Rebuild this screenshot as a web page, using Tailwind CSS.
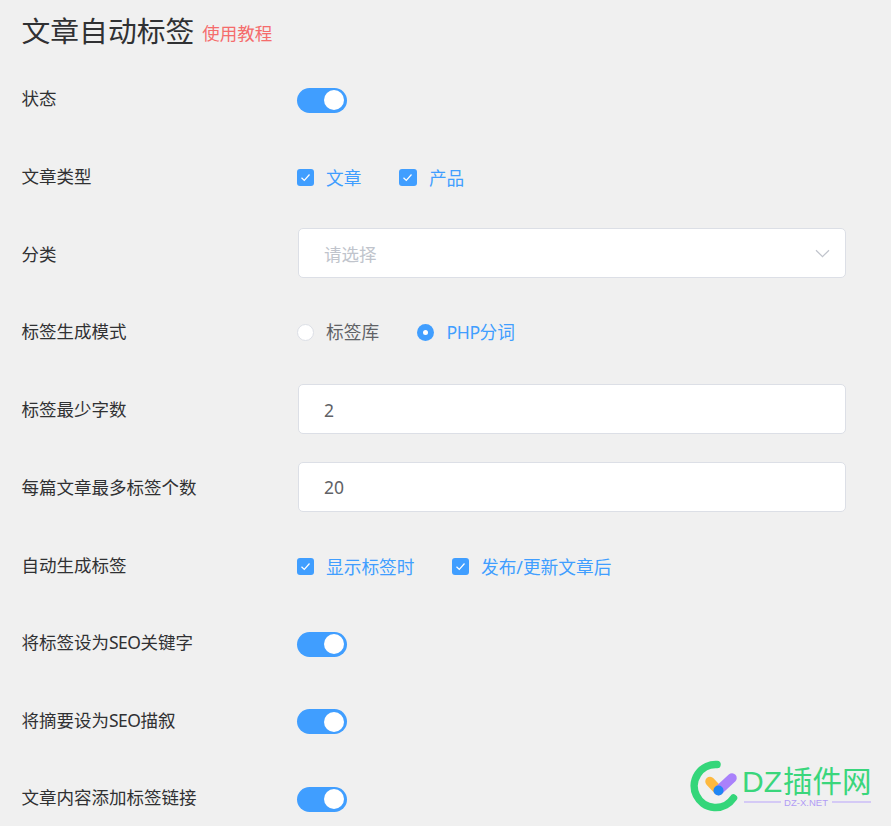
<!DOCTYPE html>
<html lang="zh-CN">
<head>
  <meta charset="UTF-8" />
  <title>文章自动标签</title>
  <script src="https://cdn.jsdelivr.net/npm/@tailwindcss/browser@4"></script>
</head>
<body class="relative h-screen overflow-hidden bg-[#f0f0f0] font-['Noto_Sans','Noto_Sans_CJK_SC',sans-serif] text-[17.5px] text-[#303133]">
  <div class="pl-[21.5px] pr-[45px]">

    <!-- title -->
    <div class="flex items-baseline h-[73.5px] pt-[7px]">
      <h1 class="text-[28.8px] leading-[48px] font-normal text-[#303133]">文章自动标签</h1>
      <a class="ml-[8px] -translate-y-[2px] text-[#f56c6c]">使用教程</a>
    </div>

    <!-- status -->
    <div class="flex items-center h-[48.6px] mb-[29.17px]">
      <label class="w-[275.5px] shrink-0 pt-px">状态</label>
      <span class="relative block w-[50px] h-[25px] mt-[5px] rounded-full bg-[#409eff]">
        <span class="absolute right-[3px] top-[2.5px] w-5 h-5 rounded-full bg-white"></span>
      </span>
    </div>

    <!-- post types -->
    <div class="flex items-center h-[48.6px] mb-[29.17px]">
      <label class="w-[275.5px] shrink-0 pt-px">文章类型</label>
      <div class="flex items-center mt-[4px] text-[17.7px] text-[#409eff]">
        <span class="flex items-center justify-center w-[17px] h-[17px] rounded-[3px] bg-[#409eff]">
          <svg width="11" height="11" viewBox="0 0 11 11" fill="none" stroke="#fff" stroke-width="1.2"><path d="M1.5 5.8 4.3 8.5 9.5 2.5"/></svg>
        </span>
        <span class="ml-[12px] mr-[37.5px] pt-px">文章</span>
        <span class="flex items-center justify-center w-[18px] h-[17px] rounded-[3px] bg-[#409eff]">
          <svg width="11" height="11" viewBox="0 0 11 11" fill="none" stroke="#fff" stroke-width="1.2"><path d="M1.5 5.8 4.3 8.5 9.5 2.5"/></svg>
        </span>
        <span class="ml-[12px] pt-px">产品</span>
      </div>
    </div>

    <!-- category -->
    <div class="flex items-center h-[48.6px] mb-[29.17px]">
      <label class="w-[276.5px] shrink-0 pt-px">分类</label>
      <div class="flex items-center justify-between w-[548px] h-[50px] pl-[25px] pr-[15px] bg-white border border-[#dcdfe6] rounded-[5px] text-[#c0c4cc]">
        <span class="pt-[2px]">请选择</span>
        <svg width="15" height="9" viewBox="0 0 15 9" fill="none" stroke="#c0c4cc" stroke-width="1.2"><path d="M1 1.2 7.5 7.6 14 1.2"/></svg>
      </div>
    </div>

    <!-- tag mode -->
    <div class="flex items-center h-[48.6px] mb-[29.17px]">
      <label class="w-[275.5px] shrink-0 pt-px">标签生成模式</label>
      <div class="flex items-center mt-[3px] text-[17.7px]">
        <span class="w-[17px] h-[17px] rounded-full bg-white border border-[#dcdfe6]"></span>
        <span class="ml-[12px] mr-[37.5px] text-[#606266]">标签库</span>
        <span class="flex items-center justify-center w-[17px] h-[17px] rounded-full bg-[#409eff]">
          <span class="w-[5px] h-[5px] rounded-full bg-white"></span>
        </span>
        <span class="ml-[13px] text-[#409eff]"><span class="tracking-[-0.5px]">PHP</span>分词</span>
      </div>
    </div>

    <!-- min chars -->
    <div class="flex items-center h-[48.6px] mb-[29.17px]">
      <label class="w-[276.5px] shrink-0 pt-px">标签最少字数</label>
      <div class="flex items-center w-[548px] h-[50px] pl-[25px] pt-[2px] bg-white border border-[#dcdfe6] rounded-[5px] text-[#606266]">2</div>
    </div>

    <!-- max tags -->
    <div class="flex items-center h-[48.6px] mb-[29.17px]">
      <label class="w-[276.5px] shrink-0 pt-px">每篇文章最多标签个数</label>
      <div class="flex items-center w-[548px] h-[50px] pl-[25px] pt-[2px] bg-white border border-[#dcdfe6] rounded-[5px] text-[#606266]">20</div>
    </div>

    <!-- auto generate -->
    <div class="flex items-center h-[48.6px] mb-[29.17px]">
      <label class="w-[275.5px] shrink-0 pt-px">自动生成标签</label>
      <div class="flex items-center mt-[4px] text-[17.7px] text-[#409eff]">
        <span class="flex items-center justify-center w-[17px] h-[17px] rounded-[3px] bg-[#409eff]">
          <svg width="11" height="11" viewBox="0 0 11 11" fill="none" stroke="#fff" stroke-width="1.2"><path d="M1.5 5.8 4.3 8.5 9.5 2.5"/></svg>
        </span>
        <span class="ml-[12px] mr-[37.5px] pt-px">显示标签时</span>
        <span class="flex items-center justify-center w-[17px] h-[17px] rounded-[3px] bg-[#409eff]">
          <svg width="11" height="11" viewBox="0 0 11 11" fill="none" stroke="#fff" stroke-width="1.2"><path d="M1.5 5.8 4.3 8.5 9.5 2.5"/></svg>
        </span>
        <span class="ml-[12px] pt-px">发布/更新文章后</span>
      </div>
    </div>

    <!-- seo keywords -->
    <div class="flex items-center h-[48.6px] mb-[29.17px]">
      <label class="w-[275.5px] shrink-0 pt-px">将标签设为<span class="tracking-[-0.5px]">SEO</span>关键字</label>
      <span class="relative block w-[50px] h-[25px] mt-[4px] rounded-full bg-[#409eff]">
        <span class="absolute right-[3px] top-[2.5px] w-5 h-5 rounded-full bg-white"></span>
      </span>
    </div>

    <!-- seo description -->
    <div class="flex items-center h-[48.6px] mb-[29.17px]">
      <label class="w-[275.5px] shrink-0 pt-px">将摘要设为<span class="tracking-[-0.5px]">SEO</span>描叙</label>
      <span class="relative block w-[50px] h-[25px] mt-[4px] rounded-full bg-[#409eff]">
        <span class="absolute right-[3px] top-[2.5px] w-5 h-5 rounded-full bg-white"></span>
      </span>
    </div>

    <!-- tag links -->
    <div class="flex items-center h-[48.6px]">
      <label class="w-[275.5px] shrink-0">文章内容添加标签链接</label>
      <span class="relative block w-[50px] h-[25px] mt-[3px] rounded-full bg-[#409eff]">
        <span class="absolute right-[3px] top-[2.5px] w-5 h-5 rounded-full bg-white"></span>
      </span>
    </div>
  </div>

  <!-- watermark -->
  <svg class="absolute left-[680px] top-[740px]" width="211" height="86" viewBox="0 0 211 86" fill="none">
    <path d="M37 24.5A21.5 21.5 0 1 0 53.5 58" stroke="#34d67a" stroke-width="7.5" stroke-linecap="round"/>
    <path d="M30 41.5 38.5 50.5" stroke="#fdb93f" stroke-width="9.5" stroke-linecap="round"/>
    <path d="M38.5 50.5 52 38" stroke="#a981fb" stroke-width="9.5" stroke-linecap="round"/>
    <circle cx="38.5" cy="50.5" r="5" fill="#1f86f5"/>
    <text x="62" y="52" font-family="Liberation Sans" font-size="30" fill="#3ad67c">DZ</text>
    <text x="103" y="52" font-family="Noto Sans CJK SC" font-size="29.5" fill="#3ad67c">插件网</text>
    <path d="M64 62H101M152 62H191" stroke="#b9a4fb" stroke-width="1"/>
    <text x="104" y="65.5" font-family="Liberation Sans" font-size="9.5" textLength="44" fill="#b09cf5">DZ-X.NET</text>
  </svg>
</body>
</html>
